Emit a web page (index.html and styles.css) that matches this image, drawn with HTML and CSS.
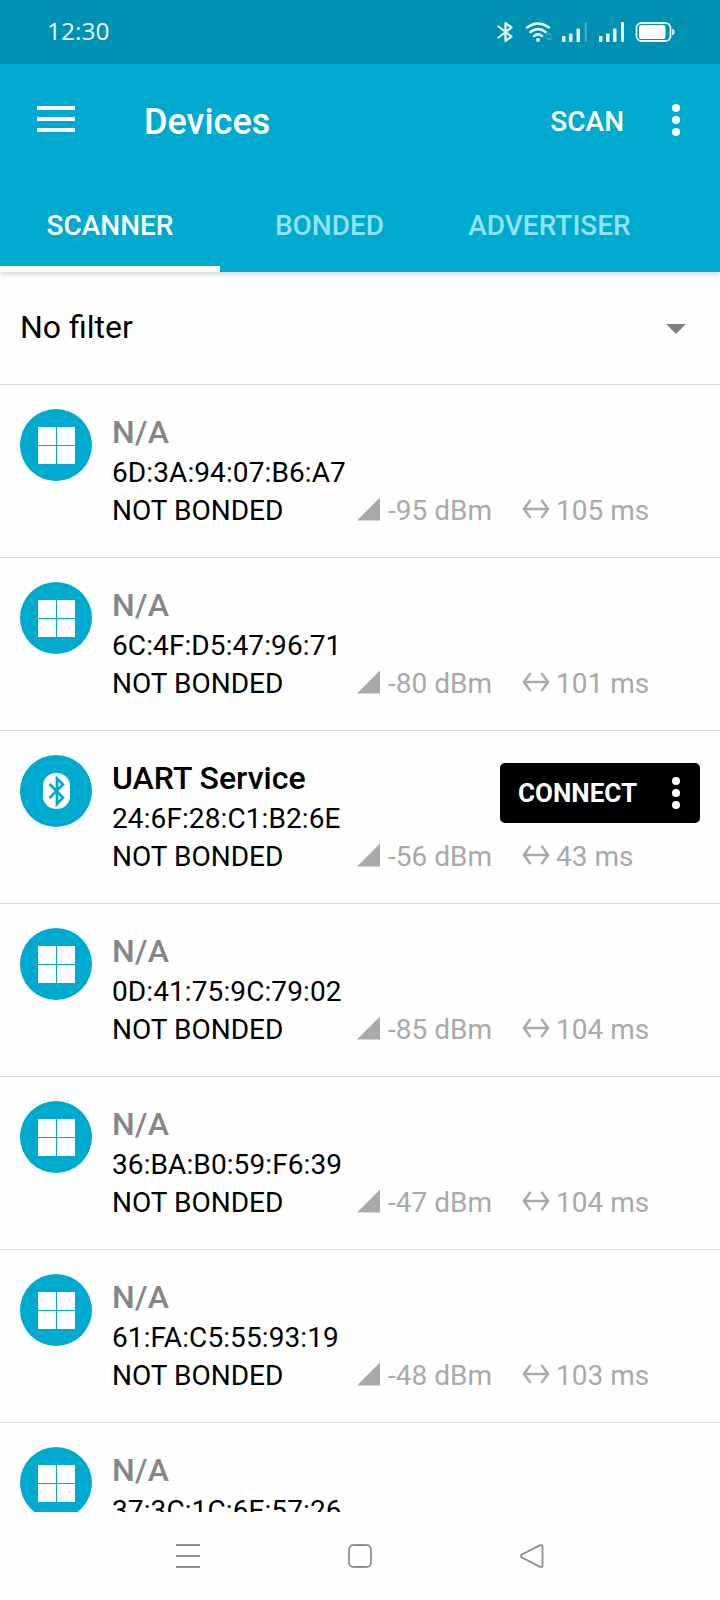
FILE: index.html
```html
<!DOCTYPE html>
<html lang="en">
<head>
<meta charset="utf-8">
<title>Devices</title>
<link rel="stylesheet" href="styles.css">
</head>
<body>
<svg class="defs" width="0" height="0">
  <symbol id="windows" viewBox="0 0 72 72"><circle cx="36" cy="36" r="36" fill="#00a9ce"/><path d="M18 18h18v18H18zM37 18h18v18H37zM18 37h18v18H18zM37 37h18v18H37z" fill="#fff"/></symbol>
  <symbol id="bluetooth" viewBox="0 0 72 72"><circle cx="36" cy="36" r="36" fill="#00a9ce"/><rect x="23" y="18" width="27" height="36" rx="13" fill="#fff"/><path d="M29.500 29L43 42.500l-6 6.500V23.500l6 6L29.500 43" fill="none" stroke="#00a9ce" stroke-width="2.700"/></symbol>
  <symbol id="signal" viewBox="0 0 24 24"><path d="M0 24L24 0v24z" fill="#a9a9a9"/></symbol>
  <symbol id="interval" viewBox="0 0 28 20"><path d="M2 10h24M8.500 1L2 10l6.500 9M19.500 1L26 10l-6.500 9" fill="none" stroke="#a9a9a9" stroke-width="2.500"/></symbol>
  <symbol id="more" viewBox="0 0 8 32"><circle cx="4" cy="4" r="4" fill="#fff"/><circle cx="4" cy="16" r="4" fill="#fff"/><circle cx="4" cy="28" r="4" fill="#fff"/></symbol>
</svg>
<div class="screen">
  <header class="status">
    <span class="clock">12:30</span>
    <svg class="status-icons" width="182" height="24" viewBox="0 0 182 24" fill="none" stroke="#e9fbff" stroke-linecap="round">
      <path d="M2.500 6.500L15.500 16.500l-6 4.500V3l6 4.500L2.500 17.500" stroke-width="2.200" stroke-linejoin="round"/>
      <path d="M31 7.500Q42 -0.500 53 7.500M34.500 12Q42 6 49.500 12M38 16Q42 12.800 46 16" stroke-width="2.500"/>
      <circle cx="42" cy="20" r="2" fill="#e9fbff" stroke="none"/>
      <path d="M51 15l2-2 2 2M51 18l2 2 2-2" stroke="#45abc6" stroke-width="1.300"/>
      <g stroke="none" fill="#e9fbff">
        <rect x="66" y="16" width="3.500" height="6" rx="1"/><rect x="73" y="13.500" width="3.500" height="8.500" rx="1"/><rect x="80.500" y="8.500" width="3.500" height="13.500" rx="1"/><rect x="88.500" y="2" width="2.500" height="20" rx="1" fill="#3ba9c6"/>
        <rect x="103" y="16" width="3.500" height="6" rx="1"/><rect x="110" y="13.500" width="3.500" height="8.500" rx="1"/><rect x="117" y="8.500" width="3.500" height="13.500" rx="1"/><rect x="125" y="2" width="3" height="20" rx="1"/>
        <rect x="143" y="5" width="26.500" height="14" rx="2.500" fill="#fff"/><path d="M176 9q2.500 0 2.500 3t-2.500 3z"/>
      </g>
      <rect x="140.500" y="3" width="34" height="18" rx="5" stroke-width="1.800"/>
    </svg>
  </header>
  <div class="top">
    <div class="appbar">
      <svg class="menu" width="38" height="28" viewBox="0 0 38 28"><path d="M0 2h38M0 13h38M0 24h38" stroke="#fff" stroke-width="4"/></svg>
      <h1 class="title">Devices</h1>
      <span class="scan">SCAN</span>
      <svg class="more" width="8" height="32"><use href="#more"/></svg>
    </div>
    <nav class="tabs">
      <span class="tab tab-active">SCANNER</span>
      <span class="tab tab-bonded">BONDED</span>
      <span class="tab tab-adv">ADVERTISER</span>
    </nav>
  </div>
  <div class="filter"><span class="filter-label">No filter</span><svg class="caret" width="20" height="10" viewBox="0 0 20 10"><path d="M0 0h20L10 10z" fill="#808080"/></svg></div>
  <main class="list">
    <section class="row">
      <svg class="avatar"><use href="#windows"/></svg>
      <div class="info">
        <div class="name muted">N/A</div><div class="mac">6D:3A:94:07:B6:A7</div>
        <div class="meta"><span class="bond">NOT BONDED</span><svg class="sig"><use href="#signal"/></svg><span class="rssi">-95 dBm</span><svg class="int"><use href="#interval"/></svg><span class="ms">105 ms</span></div>
      </div>
    </section>
    <section class="row">
      <svg class="avatar"><use href="#windows"/></svg>
      <div class="info">
        <div class="name muted">N/A</div><div class="mac">6C:4F:D5:47:96:71</div>
        <div class="meta"><span class="bond">NOT BONDED</span><svg class="sig"><use href="#signal"/></svg><span class="rssi">-80 dBm</span><svg class="int"><use href="#interval"/></svg><span class="ms">101 ms</span></div>
      </div>
    </section>
    <section class="row">
      <svg class="avatar"><use href="#bluetooth"/></svg>
      <div class="info">
        <div class="head">
          <div><div class="name">UART Service</div><div class="mac">24:6F:28:C1:B2:6E</div></div>
          <div class="connect"><span>CONNECT</span><svg width="8" height="32"><use href="#more"/></svg></div>
        </div>
        <div class="meta"><span class="bond">NOT BONDED</span><svg class="sig"><use href="#signal"/></svg><span class="rssi">-56 dBm</span><svg class="int"><use href="#interval"/></svg><span class="ms">43 ms</span></div>
      </div>
    </section>
    <section class="row">
      <svg class="avatar"><use href="#windows"/></svg>
      <div class="info">
        <div class="name muted">N/A</div><div class="mac">0D:41:75:9C:79:02</div>
        <div class="meta"><span class="bond">NOT BONDED</span><svg class="sig"><use href="#signal"/></svg><span class="rssi">-85 dBm</span><svg class="int"><use href="#interval"/></svg><span class="ms">104 ms</span></div>
      </div>
    </section>
    <section class="row">
      <svg class="avatar"><use href="#windows"/></svg>
      <div class="info">
        <div class="name muted">N/A</div><div class="mac">36:BA:B0:59:F6:39</div>
        <div class="meta"><span class="bond">NOT BONDED</span><svg class="sig"><use href="#signal"/></svg><span class="rssi">-47 dBm</span><svg class="int"><use href="#interval"/></svg><span class="ms">104 ms</span></div>
      </div>
    </section>
    <section class="row">
      <svg class="avatar"><use href="#windows"/></svg>
      <div class="info">
        <div class="name muted">N/A</div><div class="mac">61:FA:C5:55:93:19</div>
        <div class="meta"><span class="bond">NOT BONDED</span><svg class="sig"><use href="#signal"/></svg><span class="rssi">-48 dBm</span><svg class="int"><use href="#interval"/></svg><span class="ms">103 ms</span></div>
      </div>
    </section>
    <section class="row">
      <svg class="avatar"><use href="#windows"/></svg>
      <div class="info">
        <div class="name muted">N/A</div><div class="mac">37:3C:1C:6E:57:26</div>
      </div>
    </section>
  </main>
  <footer class="navbar">
    <svg width="24" height="24" viewBox="0 0 24 24"><path d="M0 1h24M0 12h24M0 23h24"/></svg>
    <svg width="24" height="24" viewBox="0 0 24 24"><rect x="1" y="1" width="22" height="22" rx="4.500"/></svg>
    <svg width="24" height="24" viewBox="0 0 24 24"><path d="M2 10.500L20 1.200Q22.500 .5 22.500 3v18q0 2.500-2.500 1.800L2 13.500Q0 12 2 10.500z"/></svg>
  </footer>
</div>
</body>
</html>
```
FILE: styles.css
```css
* { box-sizing: border-box; }
body { margin: 0; background: #fefefe; font-family: Roboto, "Liberation Sans", sans-serif; color: #000; }
svg { display: block; flex: none; }
.defs { position: absolute; }
.screen { width: 720px; height: 1600px; display: flex; flex-direction: column; overflow: hidden; white-space: nowrap; }
.status { height: 64px; flex: none; background: #0090b3; display: flex; align-items: center; justify-content: space-between; padding: 0 42px 0 47px; }
.clock { margin-bottom: 2px; font: 24.500px/36px "Open Sans", "Noto Sans", sans-serif; color: #e9fbff; }
.top { height: 208px; flex: none; background: #00a9ce; color: #fff; box-shadow: 0 3px 4px rgba(0, 0, 0, .13); }
.appbar { height: 112px; display: flex; align-items: center; padding: 0 40px 0 37px; }
.title { margin: 4px 0 0 69px; font-size: 36px; font-weight: 500; line-height: 42px; }
.scan { margin: 4px 48px 0 auto; font-size: 28px; font-weight: 500; line-height: 34px; }
.tabs { height: 96px; display: flex; font-size: 28px; font-weight: 500; color: #92e3f8; }
.tab { height: 96px; line-height: 100px; text-align: center; }
.tab-active { width: 220px; color: #fff; border-bottom: 6px solid #fff; }
.tab-bonded { width: 219px; }
.tab-adv { width: 221px; }
.filter { height: 113px; flex: none; padding: 0 34px 0 20px; border-bottom: 1px solid #dcdcdc; display: flex; align-items: center; justify-content: space-between; font-size: 32px; }
.filter-label { margin-bottom: 2px; }
.caret { margin-top: 1px; }
.list { height: 1127px; flex: none; overflow: hidden; }
.row { height: 173px; border-bottom: 1px solid #dcdcdc; padding: 24px 20px 0; display: flex; gap: 20px; }
.avatar { width: 72px; height: 72px; }
.info { padding-top: 3px; flex: 1; }
.head { display: flex; justify-content: space-between; }
.name { height: 42px; font-size: 32px; font-weight: 500; line-height: 41px; }
.muted { color: #868686; letter-spacing: .3px; }
.mac { font-size: 28px; line-height: 38px; letter-spacing: .1px; }
.meta { display: flex; align-items: center; height: 38px; font-size: 28px; line-height: 38px; color: #a9a9a9; }
.bond { width: 245px; color: #000; }
.sig { width: 23px; height: 24px; margin-bottom: 4px; }
.rssi { width: 142px; padding-left: 8px; }
.int { width: 28px; height: 20px; margin-bottom: 4px; }
.ms { padding-left: 6px; }
.connect { width: 200px; height: 60px; margin-top: 5px; padding: 0 20px 0 18px; border-radius: 5px; background: #000; color: #fff; display: flex; align-items: center; justify-content: space-between; font-size: 26px; font-weight: 700; }
.navbar { height: 88px; flex: none; padding: 32px 176px 0; display: flex; justify-content: space-between; }
.navbar svg { fill: none; stroke: #8e8e8e; stroke-width: 1.800; }
```
